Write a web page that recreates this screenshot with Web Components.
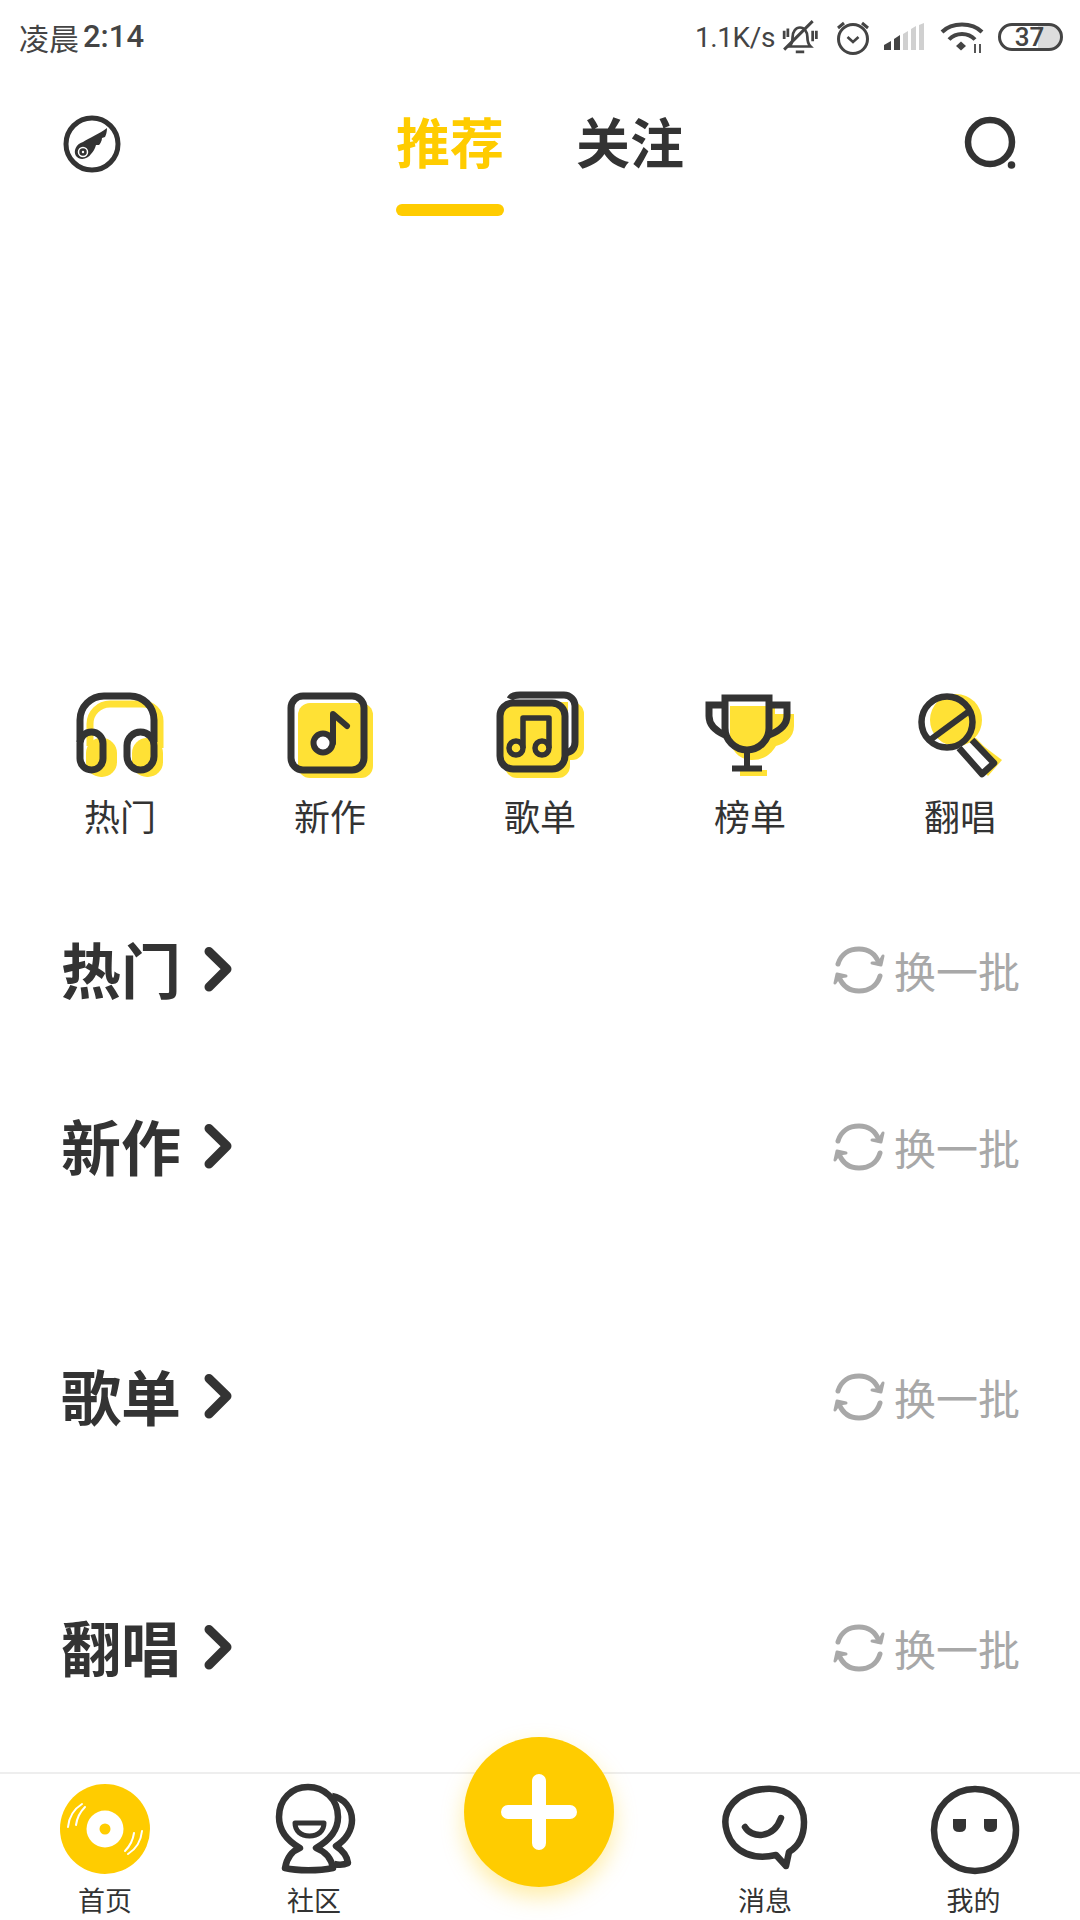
<!DOCTYPE html>
<html lang="zh">
<head>
<meta charset="utf-8">
<title>首页</title>
<style>
    html, body { margin: 0; background: #fff; }
    body { font-family: "Noto Sans CJK SC", "Noto Sans", sans-serif; color: #333; }
</style>
</head>
<body>
<app-page>
    <status-bar slot="status"></status-bar>
    <top-nav slot="nav"></top-nav>
    <quick-entry slot="quick"></quick-entry>
    <section-head slot="list" body="97">热门</section-head>
    <section-head slot="list" body="170">新作</section-head>
    <section-head slot="list" body="171">歌单</section-head>
    <section-head slot="list" body="0">翻唱</section-head>
    <tab-bar slot="tabs"></tab-bar>
</app-page>

<script>
class AppPage extends HTMLElement {
    constructor() {
        super();
        this.attachShadow({mode: "open"}).innerHTML = `
        <style>
            :host { display: flex; flex-direction: column; width: 1080px; height: 1920px; overflow: hidden; position: relative; }
            .list { display: flex; flex-direction: column; margin-top: 91px; }
            .bottom { margin-top: auto; }
        </style>
        <slot name="status"></slot>
        <slot name="nav"></slot>
        <slot name="quick"></slot>
        <div class="list"><slot name="list"></slot></div>
        <div class="bottom"><slot name="tabs"></slot></div>`;
    }
}

class StatusBar extends HTMLElement {
    constructor() {
        super();
        this.attachShadow({mode: "open"}).innerHTML = `
        <style>
            :host { display: flex; align-items: center; height: 74px; padding: 0 17px 0 19px; color: #444; font-size: 30px; }
            .time { display: flex; align-items: center; line-height: 34px; margin-top: -1px; }
            .time b { font: 500 31px Roboto, sans-serif; margin-left: 4px; }
            .right { margin-left: auto; display: flex; align-items: center; }
            .speed { font: 400 28px Roboto, sans-serif; letter-spacing: -.4px; margin-right: 6px; }
            svg { display: block; }
            .battery { position: relative; box-sizing: border-box; width: 65px; height: 28px; border: 3px solid #444; border-radius: 14px; margin-left: 12px; display: flex; align-items: center; justify-content: center; font: 500 26px/22px Roboto, sans-serif; overflow: hidden; background: linear-gradient(90deg, #fff 0 62%, #ddd 62%); }
            .battery span { margin-right: 2px; }
        </style>
        <div class="time">凌晨<b>2:14</b></div>
        <div class="right">
            <div class="speed">1.1K/s</div>
            <svg width="38" height="38" viewBox="0 0 36 36" fill="none" stroke="#444" stroke-width="2.6">
                <path d="M8 27H28c-2-2-3-5-3-9c0-5-3-9-7-9s-7 4-7 9c0 4-1 7-3 9z"/>
                <path d="M3 30L30 3" stroke-width="2.8"/>
                <path d="M14 32H22M3 12V20M6.500 10V18M30 12V22M33.500 12V20"/>
            </svg>
            <svg style="margin-left:16px" width="36" height="36" viewBox="0 0 36 36" fill="none" stroke="#444" stroke-width="3">
                <circle cx="18" cy="20" r="14.500"/>
                <path d="M12.500 18L18 23L23.500 18" stroke-width="2.6"/>
                <path d="M3 9L9 4M33 9L27 4"/>
            </svg>
            <svg style="margin-left:12px" width="42" height="30" viewBox="0 0 42 30">
                <path d="M1 23L8 19V28H1z" fill="#444"/>
                <path d="M11 17L17 13V28H11z" fill="#444"/>
                <path d="M20 12L25 9V28H20zM28 7L33 4V28H28zM36 3L41 1V28H36z" fill="#d0d0d0"/>
            </svg>
            <svg style="margin-left:15px" width="46" height="34" viewBox="0 0 46 34" fill="none" stroke="#444" stroke-width="4">
                <path d="M2 12C12 2 32 2 42 12"/>
                <path d="M9 19.500C16 12 28 12 35 19.500"/>
                <path d="M16 26L21 21.500L26 26L21 30.500z" fill="#444" stroke="none"/>
                <path d="M35 24V33M40 24V33" stroke-width="1.800"/>
            </svg>
            <div class="battery"><span>37</span></div>
        </div>`;
    }
}

class TopNav extends HTMLElement {
    constructor() {
        super();
        this.attachShadow({mode: "open"}).innerHTML = `
        <style>
            :host { display: grid; grid-template-columns: 396px 180px 1fr 64px; align-items: start; height: 614px; box-sizing: border-box; padding: 35px 0 0; font-size: 54px; font-weight: 700; line-height: 64px; color: #333; }
            .brand { margin: 5px 0 0 63px; display: block; }
            .on { width: 108px; color: #ffcc00; display: flex; flex-direction: column; }
            .on i { display: block; height: 12px; margin-top: 31px; border-radius: 6px; background: #ffcc00; }
            .search { grid-column: 4; margin: 7px 0 0 -52px; display: block; }
        </style>
        <svg class="brand" width="60" height="60" viewBox="0 0 60 60">
            <circle cx="29" cy="30" r="26" fill="none" stroke="#333" stroke-width="5"/>
            <path d="M44 14C44 18 43 21 42 23L39 24C39 27 37 30 36 31L33 31C32 35 30 38 28 40C25 45 17 47 13 42C10 37 13 30 20 28C26 24 36 20 44 14z" fill="#333"/>
            <circle cx="20" cy="38" r="4.500" fill="none" stroke="#fff" stroke-width="1.500"/>
            <circle cx="20" cy="38" r="1.200" fill="#fff"/>
        </svg>
        <div class="on">推荐<i></i></div>
        <div>关注</div>
        <svg class="search" width="60" height="60" viewBox="0 0 60 60">
            <circle cx="26" cy="26" r="22" fill="none" stroke="#333" stroke-width="6.500"/>
            <circle cx="47.500" cy="49" r="3.800" fill="#333"/>
        </svg>`;
    }
}

class EntryItem extends HTMLElement {
    constructor() {
        super();
        this.attachShadow({mode: "open"}).innerHTML = `
        <style>
            :host { display: flex; flex-direction: column; align-items: center; font-size: 36px; line-height: 44px; color: #333; }
            .icon { width: 100px; height: 100px; margin-bottom: 5px; }
        </style>
        <div class="icon"><slot name="icon"></slot></div>
        <slot></slot>`;
    }
}

class QuickEntry extends HTMLElement {
    constructor() {
        super();
        const Y = "#ffe135", D = "#333";
        this.attachShadow({mode: "open"}).innerHTML = `
        <style>
            :host { display: grid; grid-template-columns: repeat(5, 210px); padding: 0 15px; }
            svg { display: block; }
        </style>
        <entry-item>
            <svg slot="icon" width="100" height="100" viewBox="0 0 100 100" fill="none">
                <path d="M20 58V36a20 20 0 0 1 20-20h33a17 17 0 0 1 17 17V60" stroke="${Y}" stroke-width="7"/>
                <rect x="16" y="50" width="31" height="39" rx="15" fill="${Y}"/>
                <rect x="62" y="50" width="31" height="39" rx="15" fill="${Y}"/>
                <path d="M10 54V32a24 24 0 0 1 24-24h26a24 24 0 0 1 24 24V54" stroke="${D}" stroke-width="7"/>
                <rect x="10" y="44" width="23" height="38" rx="11.500" stroke="${D}" stroke-width="7"/>
                <rect x="57" y="44" width="27" height="38" rx="13.500" stroke="${D}" stroke-width="7"/>
            </svg>
            热门
        </entry-item>
        <entry-item>
            <svg slot="icon" width="100" height="100" viewBox="0 0 100 100" fill="none">
                <rect x="18" y="15" width="75" height="75" rx="12" fill="${Y}"/>
                <rect x="11" y="8" width="73" height="74" rx="12" stroke="${D}" stroke-width="7"/>
                <circle cx="43" cy="55" r="9.500" fill="#fff" stroke="${D}" stroke-width="6"/>
                <path d="M53 55V26L67 38" stroke="${D}" stroke-width="6" stroke-linecap="round" stroke-linejoin="round"/>
            </svg>
            新作
        </entry-item>
        <entry-item>
            <svg slot="icon" width="100" height="100" viewBox="0 0 100 100" fill="none">
                <path d="M30 14H82a12 12 0 0 1 12 12V60a12 12 0 0 1-12 12H80V78a12 12 0 0 1-12 12H27a12 12 0 0 1-12-12V30z" fill="${Y}"/>
                <path d="M78 12H82V66H78z" fill="#fff"/>
                <path d="M20 11Q22 7 30 7H74a11 11 0 0 1 11 11V54q0 9-9 11" stroke="${D}" stroke-width="7"/>
                <rect x="10" y="15" width="65" height="66" rx="13" fill="${Y}" stroke="${D}" stroke-width="7"/>
                <circle cx="26" cy="60" r="7" stroke="${D}" stroke-width="5.500"/>
                <circle cx="52" cy="60" r="7" stroke="${D}" stroke-width="5.500"/>
                <path d="M33 60V30H59V60" stroke="${D}" stroke-width="5.500" stroke-linejoin="round"/>
            </svg>
            歌单
        </entry-item>
        <entry-item>
            <svg slot="icon" width="100" height="100" viewBox="0 0 100 100" fill="none">
                <path d="M30 18H75V26H94V38C94 50 84 56 76 58C70 68 62 72 52 72C42 72 34 66 30 55z" fill="${Y}"/>
                <path d="M40 82H67V88H40z" fill="${Y}"/>
                <path d="M25 10H69V40a22 22 0 0 1-44 0z" stroke="${D}" stroke-width="7"/>
                <path d="M25 17H9V28Q9 40 25 47M69 17H87V28Q87 40 69 47" stroke="${D}" stroke-width="7"/>
                <path d="M47 62V81M32 80.500H62" stroke="${D}" stroke-width="6"/>
            </svg>
            榜单
        </entry-item>
        <entry-item>
            <svg slot="icon" width="100" height="100" viewBox="0 0 100 100" fill="none">
                <circle cx="46" cy="32" r="26" fill="${Y}"/>
                <path d="M60 48L92 72L78 88L50 60z" fill="${Y}"/>
                <path d="M12 36A25.500 25.500 0 0 1 20 56L38 60z" fill="#fff"/>
                <circle cx="37" cy="34" r="25.500" stroke="${D}" stroke-width="6.500"/>
                <path d="M20 52L58 24" stroke="${D}" stroke-width="6"/>
                <path d="M50 59L63 53L84 75L72 86z" fill="#fff"/>
                <path d="M60 52L84 78L87 72L66 50z" fill="${Y}"/>
                <path d="M49 60L72 86L84 75L62 52" stroke="${D}" stroke-width="6.500" stroke-linejoin="round"/>
            </svg>
            翻唱
        </entry-item>`;
    }
}

class SectionHead extends HTMLElement {
    constructor() {
        super();
        this.attachShadow({mode: "open"}).innerHTML = `
        <style>
            :host { display: block; }
            .row { display: flex; align-items: center; height: 80px; padding: 0 60px 0 61px; }
            .title { font-size: 60px; font-weight: 700; line-height: 80px; color: #333; }
            .arrow { margin: 4px 0 0 20px; display: block; }
            .more { margin: 4px 0 0 auto; display: flex; align-items: center; gap: 7px; color: #a8a8a8; font-size: 42px; line-height: 80px; }
            .more svg { display: block; }
        </style>
        <div class="row">
            <span class="title"><slot></slot></span>
            <svg class="arrow" width="32" height="50" viewBox="0 0 32 50" fill="none" stroke="#333" stroke-width="9" stroke-linecap="round" stroke-linejoin="round">
                <path d="M8 6.500L26 24L8 42"/>
            </svg>
            <div class="more">
                <svg width="56" height="54" viewBox="0 0 56 54" fill="none" stroke="#a8a8a8" stroke-width="5" stroke-linecap="round">
                    <path d="M7 21C10 11 18 6 28 6C37 6 44 10 48 20"/>
                    <path d="M41 20L50 22L52 13L48 20z" stroke-width="3" fill="#a8a8a8" stroke-linejoin="round"/>
                    <path d="M49 33C46 43 38 48 28 48C19 48 12 44 8 34"/>
                    <path d="M15 33L6 31L4 40L8 34z" stroke-width="3" fill="#a8a8a8" stroke-linejoin="round"/>
                </svg>
                <span>换一批</span>
            </div>
        </div>
        <div class="body"></div>`;
    }
    connectedCallback() {
        this.shadowRoot.querySelector(".body").style.height = (this.getAttribute("body") || 0) + "px";
    }
}

class TabItem extends HTMLElement {
    constructor() {
        super();
        this.attachShadow({mode: "open"}).innerHTML = `
        <style>
            :host { display: flex; flex-direction: column; align-items: center; font-size: 27px; line-height: 34px; color: #333; }
            .icon { width: 100px; height: 100px; margin-bottom: 3px; }
        </style>
        <div class="icon"><slot name="icon"></slot></div>
        <slot></slot>`;
    }
}

class TabBar extends HTMLElement {
    constructor() {
        super();
        const D = "#333";
        this.attachShadow({mode: "open"}).innerHTML = `
        <style>
            :host { display: grid; grid-template-columns: 210px 208px 245px 204px 213px; box-sizing: border-box; height: 148px; padding-top: 6px; border-top: 2px solid #eee; position: relative; background: #fff; }
            svg { display: block; }
            .fab { position: absolute; left: 464px; top: -37px; width: 150px; height: 150px; border-radius: 50%; background: #ffcc00; box-shadow: 0 10px 22px rgba(255, 204, 0, .35); display: flex; align-items: center; justify-content: center; }
        </style>
        <tab-item>
            <svg slot="icon" width="100" height="100" viewBox="0 0 100 100" fill="none">
                <circle cx="50" cy="49" r="45" fill="#ffcc00"/>
                <circle cx="50" cy="49" r="18.500" fill="#fff"/>
                <circle cx="50" cy="49" r="5.500" fill="#ffcc00"/>
                <path d="M13 47C14 37 19 29 27 24M21 45C22 38 25 32 30 27M87 51C86 61 81 69 73 74M79 53C78 60 75 66 70 71" stroke="#fff" stroke-width="2" stroke-linecap="round"/>
            </svg>
            首页
        </tab-item>
        <tab-item>
            <svg slot="icon" width="100" height="100" viewBox="0 0 100 100" fill="none" stroke="${D}" stroke-width="6.500" stroke-linejoin="round">
                <path d="M68 16C80 18 88 28 88 40C88 50 82 60 72 66C78 70 83 75 84 83C80 85 74 85 70 84"/>
                <path d="M36 68C22 60 15 50 15 37C15 19 28 7 44 7C60 7 74 19 74 37C74 50 66 60 52 68C60 71 67 77 69 88C55 91 33 91 21 88C23 77 28 71 36 68z" fill="#fff"/>
                <path d="M31 43H60C60 51 54 56 45.500 56C37 56 31 51 31 43z" stroke-width="5"/>
            </svg>
            社区
        </tab-item>
        <div></div>
        <tab-item>
            <svg slot="icon" width="100" height="100" viewBox="0 0 100 100" fill="none" stroke="${D}" stroke-width="6.500">
                <path d="M50 9C75 7 89 24 89 42C89 55 84 66 74 72L71 86L61 75C40 80 19 74 12 52C5 30 22 11 50 9z" stroke-linejoin="round"/>
                <path d="M30 47C36 58 58 60 66 38" stroke-linecap="round"/>
            </svg>
            消息
        </tab-item>
        <tab-item>
            <svg slot="icon" width="100" height="100" viewBox="0 0 100 100" fill="none">
                <circle cx="51" cy="50" r="41" stroke="${D}" stroke-width="6.500"/>
                <path d="M29 39H42V47Q42 52 35.500 52Q29 52 29 47z" fill="${D}"/>
                <path d="M60 39H73V47Q73 52 66.500 52Q60 52 60 47z" fill="${D}"/>
            </svg>
            我的
        </tab-item>
        <div class="fab">
            <svg width="76" height="76" viewBox="0 0 76 76" stroke="#fff" stroke-width="14" stroke-linecap="round">
                <path d="M38 7V69M7 38H69"/>
            </svg>
        </div>`;
    }
}

customElements.define("entry-item", EntryItem);
customElements.define("tab-item", TabItem);
customElements.define("app-page", AppPage);
customElements.define("status-bar", StatusBar);
customElements.define("top-nav", TopNav);
customElements.define("quick-entry", QuickEntry);
customElements.define("section-head", SectionHead);
customElements.define("tab-bar", TabBar);
</script>
</body>
</html>
